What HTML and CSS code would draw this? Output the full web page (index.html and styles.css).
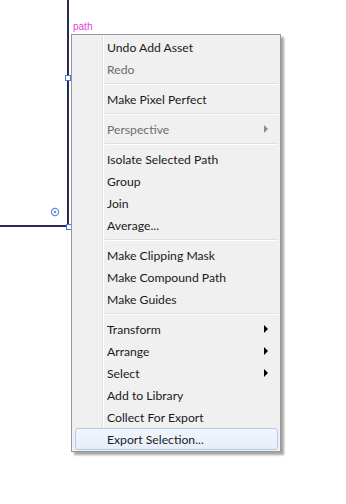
FILE: index.html
```html
<!DOCTYPE html>
<html lang="en">
<head>
  <meta charset="UTF-8">
  <meta name="viewport" content="width=device-width, initial-scale=1">
  <title>Context menu</title>
  <link rel="stylesheet" href="styles.css">
</head>
<body>
  <div class="artboard">
    <!-- selected path on the canvas -->
    <div class="path-edge path-edge-v"></div>
    <div class="path-edge path-edge-h"></div>
    <div class="handle handle-mid"></div>
    <div class="handle handle-corner"></div>
    <svg class="center-point" width="10" height="10" viewBox="0 0 10 10">
      <circle cx="5" cy="5" r="3.6" fill="none" stroke="#6a8cd8" stroke-width="1.2"/>
      <circle cx="5" cy="5" r="1.3" fill="#6a8cd8"/>
    </svg>
    <span class="path-label">path</span>

    <!-- context menu -->
    <ul class="menu">
      <li class="item">Undo Add Asset</li>
      <li class="item disabled">Redo</li>
      <li class="sep"></li>
      <li class="item">Make Pixel Perfect</li>
      <li class="sep"></li>
      <li class="item disabled sub">Perspective</li>
      <li class="sep"></li>
      <li class="item">Isolate Selected Path</li>
      <li class="item">Group</li>
      <li class="item">Join</li>
      <li class="item">Average...</li>
      <li class="sep"></li>
      <li class="item">Make Clipping Mask</li>
      <li class="item">Make Compound Path</li>
      <li class="item">Make Guides</li>
      <li class="sep"></li>
      <li class="item sub">Transform</li>
      <li class="item sub">Arrange</li>
      <li class="item sub">Select</li>
      <li class="item">Add to Library</li>
      <li class="item">Collect For Export</li>
      <li class="item active">Export Selection...</li>
    </ul>
  </div>
</body>
</html>
```

FILE: styles.css
```css
body {
  margin: 0;
  background: #fff;
  font-family: "Lato", "Liberation Sans", sans-serif;
}
.artboard {
  position: relative;
  width: 346px;
  height: 504px;
  overflow: hidden;
}
.path-edge {
  position: absolute;
  background: #2a2a58;
}
.path-edge-v {
  left: 67px;
  top: 0;
  width: 2px;
  height: 228px;
}
.path-edge-h {
  left: 0;
  top: 225px;
  width: 69px;
  height: 2px;
}
.handle {
  position: absolute;
  width: 4px;
  height: 4px;
  background: #fff;
  border: 1px solid #4f74d0;
}
.handle-mid {
  left: 65px;
  top: 75px;
}
.handle-corner {
  left: 66px;
  top: 224px;
}
.center-point {
  position: absolute;
  left: 50px;
  top: 207px;
}
.path-label {
  position: absolute;
  left: 73px;
  top: 21px;
  font-family: "Liberation Sans", sans-serif;
  font-size: 10px;
  line-height: 11px;
  color: #e03ee0;
}

/* Меню в стиле Windows 7 */
.menu {
  position: absolute;
  left: 71px;
  top: 34px;
  width: 208px;
  margin: 0;
  padding: 1px 0 1px 0;
  list-style: none;
  border: 1px solid #979797;
  background: linear-gradient(to right, #f0f0f0 30px, #e2e3e3 30px, #e2e3e3 31px, #fff 31px, #fff 32px, #f0f0f0 32px);
  box-shadow: 3px 3px 2px rgba(0, 0, 0, 0.35);
  font-size: 12.2px;
}
.item {
  position: relative;
  height: 20px;
  line-height: 22px;
  margin: 0 2px 0 3px;
  padding-left: 31px;
  border: 1px solid transparent;
  border-radius: 3px;
  color: #1a1a1a;
  white-space: nowrap;
}
.item.disabled {
  color: #6d6d6d;
}
.sub::after {
  content: "";
  position: absolute;
  right: 9px;
  top: 6px;
  border-left: 4px solid #000;
  border-top: 4px solid transparent;
  border-bottom: 4px solid transparent;
}
.disabled.sub::after {
  border-left-color: #8d8d8d;
}
.item.active {
  border-color: #aeccf1;
  background: linear-gradient(to bottom, #f2f6fc, #e6eefa);
}
.sep {
  height: 1px;
  margin: 3px 2px 3px 33px;
  border-bottom: 1px solid #fff;
  background: #e0e0e0;
}
```
